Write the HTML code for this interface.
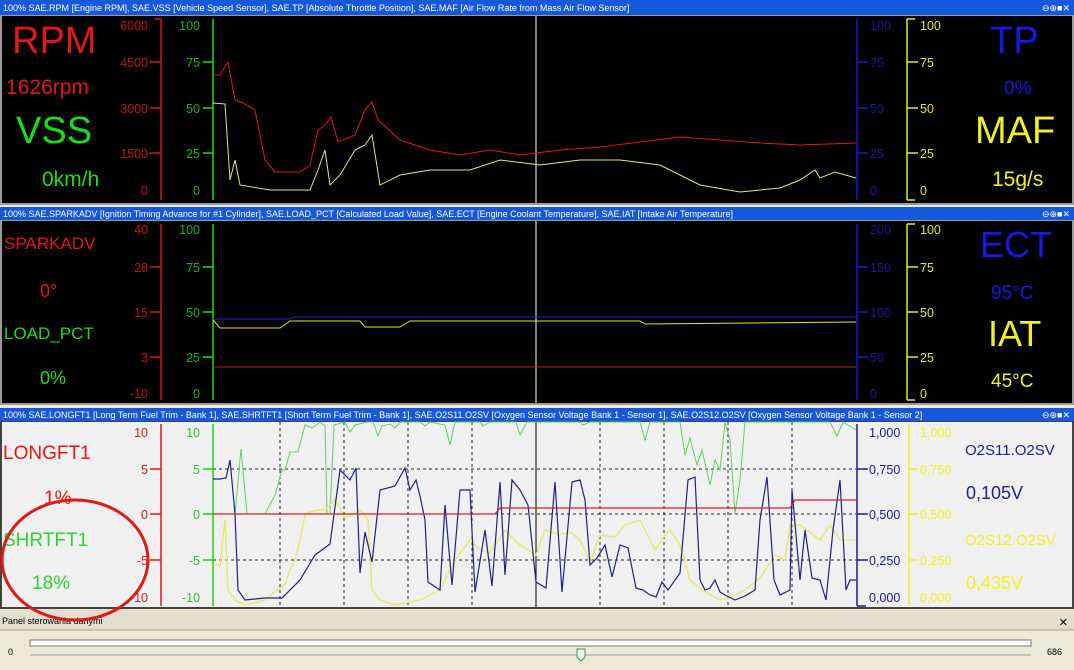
<!DOCTYPE html>
<html><head><meta charset="utf-8"><style>
html,body{margin:0;padding:0;width:1074px;height:670px;overflow:hidden;background:#ece9d8;font-family:"Liberation Sans",sans-serif}
svg{display:block}
</style></head><body>
<svg width="1074" height="670" viewBox="0 0 1074 670" xmlns="http://www.w3.org/2000/svg" font-family="Liberation Sans, sans-serif">
<!-- Panel 1 -->
<rect x="0" y="0" width="1074" height="15" fill="#1658dc"/>
<rect x="0" y="15" width="1074" height="190" fill="#9a9a9a"/>
<rect x="2" y="16" width="1070" height="187" fill="#000"/>
<text x="3" y="11" font-size="9" fill="#fff">100% SAE.RPM [Engine RPM], SAE.VSS [Vehicle Speed Sensor], SAE.TP [Absolute Throttle Position], SAE.MAF [Air Flow Rate from Mass Air Flow Sensor]</text>
<text x="1070" y="11" font-size="9" fill="#fff" text-anchor="end">⊖⊕■✕</text>
<text x="12" y="53" font-size="38" fill="#e01818">RPM</text>
<text x="6" y="94" font-size="21" fill="#e01818">1626rpm</text>
<text x="16" y="143" font-size="38" fill="#18e018">VSS</text>
<text x="42" y="186" font-size="21" fill="#18e018">0km/h</text>
<g stroke="#d01818" stroke-width="1.5"><line x1="161" y1="19" x2="161" y2="200"/><line x1="150" y1="62" x2="161" y2="62"/><line x1="150" y1="108" x2="161" y2="108"/><line x1="150" y1="153" x2="161" y2="153"/><line x1="155" y1="19" x2="161" y2="19"/></g>
<g fill="#b81818" font-size="12.5" text-anchor="end"><text x="148" y="30">6000</text><text x="148" y="67">4500</text><text x="148" y="113">3000</text><text x="148" y="158">1500</text><text x="148" y="195">0</text></g>
<g stroke="#18e018" stroke-width="1.5"><line x1="213" y1="19" x2="213" y2="200"/><line x1="203" y1="62" x2="213" y2="62"/><line x1="203" y1="108" x2="213" y2="108"/><line x1="203" y1="153" x2="213" y2="153"/></g>
<g fill="#18b018" font-size="12.5" text-anchor="end"><text x="200" y="30">100</text><text x="200" y="67">75</text><text x="200" y="113">50</text><text x="200" y="158">25</text><text x="200" y="195">0</text></g>
<line x1="536" y1="16" x2="536" y2="203" stroke="#fff"/>
<polyline fill="none" stroke="#e01818" points="213,75 220,75 228,62 235,100 243,103 255,110 265,160 275,172 300,172 310,165 318,130 325,125 331,117 338,142 355,135 365,110 372,102 378,120 400,140 430,150 460,155 490,150 520,155 560,150 600,147 640,142 680,137 720,140 760,143 800,145 856,143"/>
<polyline fill="none" stroke="#e8e870" points="213,103 225,104 230,180 235,160 240,185 270,190 310,190 318,170 325,150 330,185 340,175 355,150 365,145 372,135 380,185 400,175 430,170 470,170 500,160 540,165 580,160 620,160 660,165 680,175 700,185 740,192 780,188 800,180 815,170 820,178 835,172 856,178"/>
<g stroke="#1818d0" stroke-width="1.5"><line x1="857" y1="19" x2="857" y2="200"/><line x1="857" y1="62" x2="868" y2="62"/><line x1="857" y1="108" x2="868" y2="108"/><line x1="857" y1="153" x2="868" y2="153"/></g>
<g fill="#181890" font-size="12.5"><text x="870" y="30">100</text><text x="870" y="67">75</text><text x="870" y="113">50</text><text x="870" y="158">25</text><text x="870" y="195">0</text></g>
<g stroke="#e8e818" stroke-width="1.5"><line x1="907" y1="19" x2="907" y2="200"/><line x1="907" y1="19" x2="915" y2="19"/><line x1="907" y1="200" x2="915" y2="200"/><line x1="907" y1="62" x2="918" y2="62"/><line x1="907" y1="108" x2="918" y2="108"/><line x1="907" y1="153" x2="918" y2="153"/></g>
<g fill="#e8e818" font-size="12.5"><text x="920" y="30">100</text><text x="920" y="67">75</text><text x="920" y="113">50</text><text x="920" y="158">25</text><text x="920" y="195">0</text></g>
<text x="990" y="53" font-size="38" fill="#1818e0">TP</text>
<text x="1004" y="94" font-size="19" fill="#1818e0">0%</text>
<text x="975" y="143" font-size="38" fill="#f0f020">MAF</text>
<text x="992" y="186" font-size="21" fill="#f0f020">15g/s</text>

<!-- Panel 2 -->
<rect x="0" y="207" width="1074" height="13" fill="#1658dc"/>
<rect x="0" y="220" width="1074" height="185" fill="#9a9a9a"/>
<rect x="2" y="221" width="1070" height="182" fill="#000"/>
<text x="3" y="217" font-size="9" fill="#fff">100% SAE.SPARKADV [Ignition Timing Advance for #1 Cylinder], SAE.LOAD_PCT [Calculated Load Value], SAE.ECT [Engine Coolant Temperature], SAE.IAT [Intake Air Temperature]</text>
<text x="1070" y="217" font-size="9" fill="#fff" text-anchor="end">⊖⊕■✕</text>
<text x="4" y="249" font-size="17" fill="#e01818">SPARKADV</text>
<text x="40" y="297" font-size="18" fill="#e01818">0°</text>
<text x="4" y="339" font-size="17" fill="#18e018">LOAD_PCT</text>
<text x="40" y="384" font-size="18" fill="#18e018">0%</text>
<g stroke="#d01818" stroke-width="1.5"><line x1="161" y1="224" x2="161" y2="400"/><line x1="150" y1="267" x2="161" y2="267"/><line x1="150" y1="312" x2="161" y2="312"/><line x1="150" y1="357" x2="161" y2="357"/></g>
<g fill="#b81818" font-size="12.5" text-anchor="end"><text x="148" y="234">40</text><text x="148" y="272">28</text><text x="148" y="317">15</text><text x="148" y="362">3</text><text x="148" y="398">-10</text></g>
<g stroke="#18e018" stroke-width="1.5"><line x1="213" y1="224" x2="213" y2="400"/><line x1="203" y1="267" x2="213" y2="267"/><line x1="203" y1="312" x2="213" y2="312"/><line x1="203" y1="357" x2="213" y2="357"/></g>
<g fill="#18b018" font-size="12.5" text-anchor="end"><text x="200" y="234">100</text><text x="200" y="272">75</text><text x="200" y="317">50</text><text x="200" y="362">25</text><text x="200" y="398">0</text></g>
<line x1="536" y1="221" x2="536" y2="403" stroke="#fff"/>
<polyline fill="none" stroke="#2020e0" points="213,319 290,319 295,317 856,317"/>
<polyline fill="none" stroke="#e8e818" points="213,320 220,328 280,328 290,321 360,321 365,327 400,327 410,321 640,321 645,324 856,322"/>
<line x1="213" y1="367" x2="856" y2="367" stroke="#c01818"/>
<g stroke="#1818d0" stroke-width="1.5"><line x1="857" y1="224" x2="857" y2="400"/><line x1="857" y1="267" x2="868" y2="267"/><line x1="857" y1="312" x2="868" y2="312"/><line x1="857" y1="357" x2="868" y2="357"/></g>
<g fill="#181890" font-size="12.5"><text x="870" y="234">200</text><text x="870" y="272">150</text><text x="870" y="317">100</text><text x="870" y="362">50</text><text x="870" y="398">0</text></g>
<g stroke="#e8e818" stroke-width="1.5"><line x1="907" y1="224" x2="907" y2="400"/><line x1="907" y1="224" x2="915" y2="224"/><line x1="907" y1="400" x2="915" y2="400"/><line x1="907" y1="267" x2="918" y2="267"/><line x1="907" y1="312" x2="918" y2="312"/><line x1="907" y1="357" x2="918" y2="357"/></g>
<g fill="#e8e818" font-size="12.5"><text x="920" y="234">100</text><text x="920" y="272">75</text><text x="920" y="317">50</text><text x="920" y="362">25</text><text x="920" y="398">0</text></g>
<text x="980" y="257" font-size="36" fill="#1818e0">ECT</text>
<text x="991" y="299" font-size="19" fill="#1818e0">95°C</text>
<text x="988" y="346" font-size="36" fill="#f0f020">IAT</text>
<text x="991" y="387" font-size="19" fill="#f0f020">45°C</text>

<!-- Panel 3 -->
<rect x="0" y="408" width="1074" height="13" fill="#1658dc"/>
<rect x="0" y="421" width="1074" height="188" fill="#444"/>
<rect x="2" y="422" width="1070" height="185" fill="#f0f0f0"/>
<text x="3" y="418" font-size="9" fill="#fff">100% SAE.LONGFT1 [Long Term Fuel Trim - Bank 1], SAE.SHRTFT1 [Short Term Fuel Trim - Bank 1], SAE.O2S11.O2SV [Oxygen Sensor Voltage Bank 1 - Sensor 1], SAE.O2S12.O2SV [Oxygen Sensor Voltage Bank 1 - Sensor 2]</text>
<text x="1070" y="418" font-size="9" fill="#fff" text-anchor="end">⊖⊕■✕</text>
<text x="3" y="459" font-size="19" fill="#e01818">LONGFT1</text>
<text x="44" y="504" font-size="19" fill="#e01818">1%</text>
<text x="3" y="546" font-size="19" fill="#30d030">SHRTFT1</text>
<text x="32" y="589" font-size="19" fill="#30d030">18%</text>
<g stroke="#223" stroke-width="1" stroke-dasharray="3,3">
<line x1="213" y1="469" x2="856" y2="469"/><line x1="213" y1="514" x2="856" y2="514"/><line x1="213" y1="560" x2="856" y2="560"/>
<line x1="280" y1="422" x2="280" y2="607"/><line x1="344" y1="422" x2="344" y2="607"/><line x1="408" y1="422" x2="408" y2="607"/><line x1="472" y1="422" x2="472" y2="607"/><line x1="600" y1="422" x2="600" y2="607"/><line x1="664" y1="422" x2="664" y2="607"/><line x1="728" y1="422" x2="728" y2="607"/><line x1="792" y1="422" x2="792" y2="607"/></g>
<line x1="536" y1="422" x2="536" y2="607" stroke="#000"/>
<g stroke="#e01818" stroke-width="1.5"><line x1="161" y1="424" x2="161" y2="606"/><line x1="150" y1="469" x2="161" y2="469"/><line x1="150" y1="514" x2="161" y2="514"/><line x1="150" y1="560" x2="161" y2="560"/></g>
<g fill="#d02020" font-size="12.5" text-anchor="end"><text x="148" y="437">10</text><text x="148" y="474">5</text><text x="148" y="519">0</text><text x="148" y="565">-5</text><text x="148" y="602">-10</text></g>
<g stroke="#18d018" stroke-width="1.5"><line x1="213" y1="424" x2="213" y2="606"/><line x1="203" y1="469" x2="213" y2="469"/><line x1="203" y1="514" x2="213" y2="514"/><line x1="203" y1="560" x2="213" y2="560"/></g>
<g fill="#30c030" font-size="12.5" text-anchor="end"><text x="200" y="437">10</text><text x="200" y="474">5</text><text x="200" y="519">0</text><text x="200" y="565">-5</text><text x="200" y="602">-10</text></g>
<polyline fill="none" stroke="#60d060" points="213,514 235,514 241,449 247,514 265,514 275,495 282,470 285,470 290,452 298,452 305,425 312,428 320,422 325,426 327,514 330,514 334,425 345,422 350,432 355,425 367,422 373,422 378,436 382,426 390,424 395,428 400,422 420,422 425,426 430,422 445,425 450,445 455,422 480,422 483,426 490,422 516,422 520,435 527,422 580,422 583,425 590,422 640,422 645,440 650,422 680,422 685,455 690,438 697,465 702,450 710,485 715,460 720,470 725,422 730,440 735,514 740,480 745,422 830,422 837,436 843,422 856,430"/>
<polyline fill="none" stroke="#e8e870" stroke-width="1.5" points="213,565 220,565 225,520 228,590 235,600 245,605 265,600 275,592 285,584 290,570 295,560 300,540 305,515 310,512 318,510 325,510 330,505 335,500 345,518 360,510 368,520 372,590 380,600 395,605 420,600 440,590 455,560 470,540 480,550 490,553 505,530 520,545 536,555 545,530 560,535 570,532 580,540 590,562 600,535 615,537 625,525 640,520 650,540 655,550 665,535 670,530 680,545 690,580 705,592 720,600 730,598 745,590 760,578 775,555 785,560 790,525 800,525 820,540 830,525 840,540 856,540"/>
<polyline fill="none" stroke="#20208a" stroke-width="1.2" points="213,479 220,479 226,478 230,460 235,514 238,590 245,600 265,598 282,598 300,580 315,555 330,544 340,470 350,480 356,468 360,573 365,532 372,562 380,490 395,486 405,468 410,490 416,480 420,496 425,520 428,582 440,590 445,505 452,585 460,490 470,490 475,592 485,530 492,586 500,482 505,575 512,480 520,490 528,505 536,582 546,588 555,482 562,592 572,482 580,480 585,500 590,565 597,558 605,545 612,577 620,545 628,548 636,588 643,590 650,595 656,597 662,582 668,590 680,573 688,480 695,477 700,580 705,590 710,588 715,580 720,592 725,595 735,600 745,596 755,590 760,520 767,477 774,580 780,595 790,590 792,490 800,580 805,530 812,578 820,580 826,600 833,530 840,480 846,590 850,580 856,580"/>
<polyline fill="none" stroke="#d02020" stroke-width="1.2" points="213,514 495,514 500,508 790,508 795,500 856,500"/>
<g stroke="#1818a0" stroke-width="1.5"><line x1="857" y1="424" x2="857" y2="606"/><line x1="857" y1="469" x2="868" y2="469"/><line x1="857" y1="514" x2="868" y2="514"/><line x1="857" y1="560" x2="868" y2="560"/><line x1="857" y1="606" x2="866" y2="606"/></g>
<g fill="#1818a0" font-size="12.5"><text x="869" y="437">1,000</text><text x="869" y="474">0,750</text><text x="869" y="519">0,500</text><text x="869" y="565">0,250</text><text x="869" y="602">0,000</text></g>
<g stroke="#f0f020" stroke-width="1.5"><line x1="909" y1="424" x2="909" y2="606"/><line x1="909" y1="469" x2="918" y2="469"/><line x1="909" y1="514" x2="918" y2="514"/><line x1="909" y1="560" x2="918" y2="560"/></g>
<g fill="#f0f020" font-size="12.5"><text x="920" y="437">1,000</text><text x="920" y="474">0,750</text><text x="920" y="519">0,500</text><text x="920" y="565">0,250</text><text x="920" y="602">0,000</text></g>
<text x="965" y="455" font-size="15" fill="#20209a">O2S11.O2SV</text>
<text x="966" y="499" font-size="18" fill="#20209a">0,105V</text>
<text x="965" y="545" font-size="15" fill="#f0f020">O2S12.O2SV</text>
<text x="966" y="589" font-size="18" fill="#f0f020">0,435V</text>

<!-- Bottom panel -->
<rect x="0" y="609" width="1074" height="61" fill="#ece9d8"/>
<rect x="0" y="609" width="1074" height="21" fill="#e2dfcc"/>
<line x1="0" y1="630" x2="1074" y2="630" stroke="#a8a490"/>
<text x="2" y="624" font-size="9" fill="#000">Panel sterowania danymi</text>
<text x="1068" y="626" font-size="11" fill="#000" text-anchor="end">✕</text>
<rect x="30" y="640" width="1001" height="6" fill="#fff" stroke="#777"/>
<line x1="30" y1="655" x2="1031" y2="655" stroke="#999"/>
<text x="8" y="655" font-size="9" fill="#000">0</text>
<text x="1047" y="655" font-size="9" fill="#000">686</text>
<path d="M577,649 h8 v8 l-4,4 l-4,-4 z" fill="#f4f4f0" stroke="#3a9a4a"/>
<!-- annotation circle -->
<ellipse cx="75" cy="560" rx="73" ry="60" fill="none" stroke="#e01818" stroke-width="3"/>
</svg>
</body></html>
